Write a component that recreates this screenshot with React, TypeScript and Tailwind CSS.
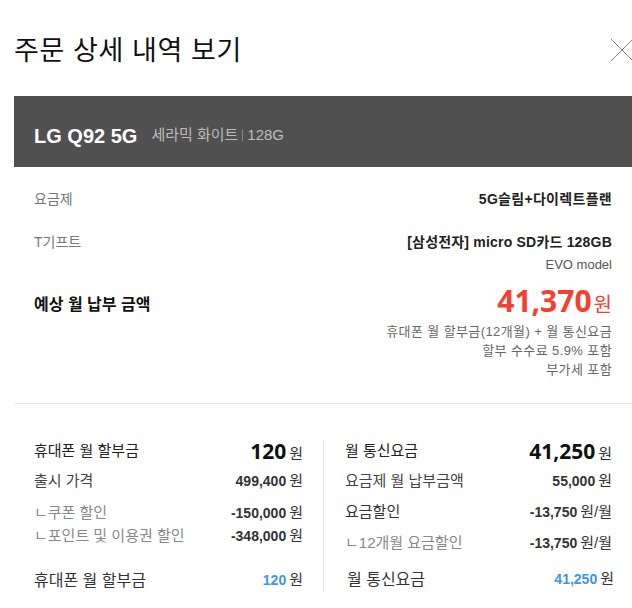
import React from "react";

const KR = { fontFamily: '"Liberation Sans", "Noto Sans CJK KR", sans-serif' };

export default function App() {
  return (
    <div className="w-[632px] h-[608px] overflow-hidden bg-white relative" style={KR}>
      <div className="h-[96px] pl-[14px] flex items-center">
        <h1 className="text-[27px] font-normal text-[#111] leading-none tracking-[0.6px] mt-[7px]">주문 상세 내역 보기</h1>
      </div>
      <button className="absolute left-[610px] top-[38px] w-[24px] h-[24px]">
        <svg width="24" height="24" viewBox="0 0 24 24">
          <path d="M1 1 L23 23 M23 1 L1 23" stroke="#888" strokeWidth="1" fill="none" />
        </svg>
      </button>
      <div className="ml-[14px]">
        <div className="h-[71px] bg-[#505050] flex items-center pl-[20px] pt-[8px] gap-[14px]">
          <span className="text-white font-bold text-[20px]">LG Q92 5G</span>
          <span className="text-[#bdbdbd] text-[15px] flex items-center">
            세라믹 화이트<span className="mx-[4px] inline-block w-px h-[11px] bg-[#8a8a8a]"></span>128G
          </span>
        </div>
        <div className="px-[20px] pt-[22px]">
          <div className="flex justify-between items-start">
            <span className="text-[14px] text-[#777]">요금제</span>
            <span className="text-[14px] font-bold text-[#222] tracking-[0.3px]">5G슬림+다이렉트플랜</span>
          </div>
          <div className="flex justify-between items-start mt-[22px]">
            <span className="text-[14px] text-[#777]">T기프트</span>
            <div className="text-right">
              <div className="text-[14px] font-bold text-[#222] tracking-[0.2px]">[삼성전자] micro SD카드 128GB</div>
              <div className="text-[13px] text-[#555] mt-[2px]">EVO model</div>
            </div>
          </div>
          <div className="flex justify-between items-start mt-[11px]">
            <span className="text-[16px] font-bold text-[#111] mt-[7px]">예상 월 납부 금액</span>
            <div className="text-right">
              <div className="text-[#f24130] leading-none">
                <span className="text-[30px] font-bold" style={{ fontFamily: '"Noto Sans", sans-serif' }}>41,370</span>
                <span className="text-[20px] ml-[2px]">원</span>
              </div>
              <div className="text-[13px] text-[#666] leading-[19px] mt-[6px] tracking-[0.4px]">
                <div>휴대폰 월 할부금(12개월) + 월 통신요금</div>
                <div>할부 수수료 5.9% 포함</div>
                <div>부가세 포함</div>
              </div>
            </div>
          </div>
        </div>
        <div className="mt-[24px] border-t border-[#e8e8e8]" />
        <div className="flex">
          <div className="w-[309px] pl-[20px] pr-[20px] pt-[38px] text-[15px]">
            <Row label="휴대폰 월 할부금" labelCls="text-[#222]" big value="120" />
            <Row label="출시 가격" labelCls="text-[#444]" value="499,400" mt="mt-[10px]" />
            <Row label="ㄴ쿠폰 할인" labelCls="text-[#888]" value="-150,000" mt="mt-[12px]" />
            <Row label="ㄴ포인트 및 이용권 할인" labelCls="text-[#888]" value="-348,000" mt="mt-[3px]" />
            <Row label="휴대폰 월 할부금" labelCls="text-[#333] text-[16px]" blue value="120" mt="mt-[24px]" />
          </div>
          <div className="w-px bg-[#e8e8e8] mt-[35px] h-[152px]" />
          <div className="flex-1 pl-[21px] pr-[20px] pt-[38px] text-[15px]">
            <Row label="월 통신요금" labelCls="text-[#222]" big value="41,250" />
            <Row label="요금제 월 납부금액" labelCls="text-[#444]" value="55,000" mt="mt-[10px]" />
            <Row label="요금할인" labelCls="text-[#333]" value="-13,750" suffix="원/월" mt="mt-[11px]" />
            <Row label="ㄴ12개월 요금할인" labelCls="text-[#888]" value="-13,750" suffix="원/월" mt="mt-[11px]" />
            <Row label="월 통신요금" labelCls="text-[#333] text-[16px] ml-[2px]" blue value="41,250" mt="mt-[16px]" endCls="-mr-[2px]" />
          </div>
        </div>
      </div>
    </div>
  );
}

function Row({
  label,
  labelCls,
  value,
  big,
  blue,
  suffix = "원",
  mt = "",
  endCls = "",
}: {
  label: string;
  labelCls: string;
  value: string;
  big?: boolean;
  blue?: boolean;
  suffix?: string;
  mt?: string;
  endCls?: string;
}) {
  return (
    <div className={`flex justify-between items-center h-[20px] ${mt}`}>
      <span className={labelCls}>{label}</span>
      <span className={`flex items-baseline ${endCls}`}>
        {big ? (
          <span className="text-[21px] font-bold text-[#111]" style={{ fontFamily: '"Noto Sans", sans-serif' }}>{value}</span>
        ) : blue ? (
          <span className="text-[14px] font-bold text-[#3d95e6]">{value}</span>
        ) : (
          <span className="text-[14px] font-bold text-[#333]">{value}</span>
        )}
        <span className="ml-[3px] text-[15px] text-[#333]">{suffix}</span>
      </span>
    </div>
  );
}
